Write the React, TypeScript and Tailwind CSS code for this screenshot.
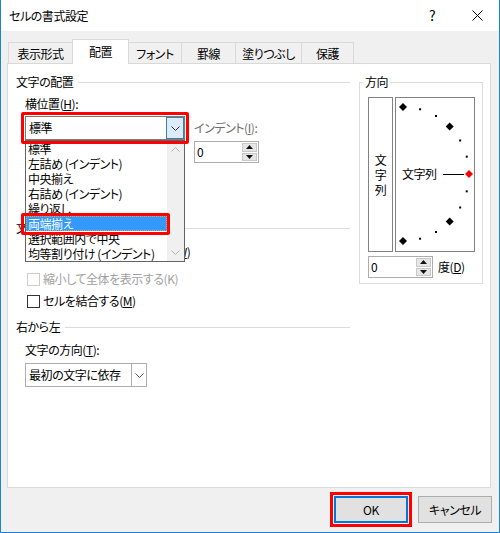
import React from "react";

const tabs = ["表示形式", "配置", "フォント", "罫線", "塗りつぶし", "保護"];
const tabWidths = ["w-[65px]", "w-[57px]", "w-[54px]", "w-[55px]", "w-[67px]", "w-[53px]"];

const listItems = [
  "標準",
  "左詰め (インデント)",
  "中央揃え",
  "右詰め (インデント)",
  "繰り返し",
  "両端揃え",
  "選択範囲内で中央",
  "均等割り付け (インデント)",
];

function ChevronDown({ color = "#444" }: { color?: string }) {
  return (
    <svg width="9" height="5" viewBox="0 0 9 5">
      <polyline points="0.5,0.5 4.5,4.5 8.5,0.5" fill="none" stroke={color} strokeWidth="1" />
    </svg>
  );
}

function ChevronUp({ color = "#444" }: { color?: string }) {
  return (
    <svg width="9" height="5" viewBox="0 0 9 5">
      <polyline points="0.5,4.5 4.5,0.5 8.5,4.5" fill="none" stroke={color} strokeWidth="1" />
    </svg>
  );
}

function SpinButton({ up }: { up?: boolean }) {
  return (
    <div className="flex flex-1 items-center justify-center border border-[#c8c8c8] bg-[#e6e6e6]">
      <svg width="7" height="4" viewBox="0 0 7 4">
        <polygon points={up ? "3.5,0 7,4 0,4" : "0,0 7,0 3.5,4"} fill="#111" />
      </svg>
    </div>
  );
}

function Spinner({ className, value }: { className: string; value: string }) {
  return (
    <div className={`flex h-[22px] border border-[#adadad] bg-white ${className}`}>
      <span className="flex-1 pl-[2px] leading-[20px]">{value}</span>
      <div className="flex w-[17px] flex-col gap-px p-px">
        <SpinButton up />
        <SpinButton />
      </div>
    </div>
  );
}

function SectionHeader({ label, className = "" }: { label: string; className?: string }) {
  return (
    <div className={`flex h-[16px] items-center leading-[16px] ${className}`}>
      <span>{label}</span>
      <span className="ml-[5px] h-px flex-1 bg-[#dcdcdc]" />
    </div>
  );
}

function CheckRow({ children, disabled, className = "" }: { children: React.ReactNode; disabled?: boolean; className?: string }) {
  return (
    <div className={`flex h-[16px] items-center leading-[16px] ${className}`}>
      <span
        className={`ml-[11px] h-[13px] w-[13px] border bg-white ${disabled ? "border-[#cccccc]" : "border-[#333333]"}`}
      />
      <span className={`ml-[3px] ${disabled ? "text-[#a0a0a0]" : ""}`}>{children}</span>
    </div>
  );
}

function OrientationDial() {
  const points = Array.from({ length: 13 }, (_, i) => {
    const a = ((-90 + 15 * i) * Math.PI) / 180;
    return { i, x: 7 + 66 * Math.cos(a), y: 76 + 67 * Math.sin(a) };
  });
  return (
    <div className="relative ml-[2px] h-[155px] w-[80px] border border-[#828282]">
      <svg className="absolute inset-0" width="78" height="153" viewBox="0 0 78 153">
        {points.map((p) =>
          p.i % 3 === 0 ? (
            <polygon
              key={p.i}
              points={`${p.x},${p.y - 4} ${p.x + 4},${p.y} ${p.x},${p.y + 4} ${p.x - 4},${p.y}`}
              fill={p.i === 6 ? "#ff0000" : "#000"}
            />
          ) : (
            <rect key={p.i} x={p.x - 1} y={p.y - 1} width="2" height="2" fill="#000" />
          ),
        )}
        <line x1="47" y1="76.5" x2="68" y2="76.5" stroke="#000" strokeWidth="1" />
      </svg>
      <span className="absolute left-[6px] top-[68px] leading-[16px]">文字列</span>
    </div>
  );
}

export default function App() {
  return (
    <div className="flex h-[533px] w-[500px] flex-col border-x border-b border-[#1883d7] bg-[#f0f0f0] font-['Noto_Sans_CJK_JP','Noto_Sans',sans-serif] text-[12px] tracking-[-0.45px] text-black [font-feature-settings:'palt']">
      {/* title bar */}
      <div className="flex h-[31px] shrink-0 items-center bg-white pl-[8px]">
        <span>セルの書式設定</span>
        <span className="ml-auto w-[30px] text-center text-[14px]">?</span>
        <span className="ml-[15px] mr-[7px] flex w-[30px] justify-center">
          <svg width="11" height="11" viewBox="0 0 11 11">
            <path d="M0.5 0.5 L10.5 10.5 M10.5 0.5 L0.5 10.5" stroke="#000" strokeWidth="1" />
          </svg>
        </span>
      </div>

      {/* tabs */}
      <div className="ml-[7px] mt-[8px] flex h-[24px] items-end">
        {tabs.map((t, i) => (
          <div
            key={t}
            className={`${tabWidths[i]} ${i > 0 ? "-ml-px" : ""} flex items-center justify-center border-x border-t border-[#d9d9d9] ${
              i === 1 ? "relative z-10 -mb-px h-[25px] bg-white pb-[1px]" : "h-[21px] bg-[#f0f0f0] pt-[1px]"
            }`}
          >
            {t}
          </div>
        ))}
      </div>

      {/* panel */}
      <div className="relative ml-[6px] flex h-[425px] w-[484px] border border-[#d9d9d9] bg-white">
        <div className="flex w-[342px] flex-col pl-[8px] pt-[10px]">
          <SectionHeader label="文字の配置" />
          <div className="ml-[9px] mt-[6px] h-[16px] leading-[16px]">
            横位置(<span className="underline">H</span>):
          </div>
          <div className="ml-[9px] mt-[4px] flex items-start">
            <div className="relative flex h-[24px] w-[160px] border border-[#7a7a7a] bg-white">
              <span className="flex-1 pl-[3px] leading-[22px]">標準</span>
              <span className="flex w-[18px] items-center justify-center border border-[#3c7fb1] bg-[#dcecfc]">
                <ChevronDown color="#333" />
              </span>
              {/* dropdown list */}
              <div className="absolute left-[-1px] top-[23px] z-20 flex h-[122px] w-[160px] border border-[#646464] bg-white">
                <div className="flex flex-1 flex-col">
                  {listItems.map((item, i) =>
                    i === 5 ? (
                      <div key={item} className="relative h-[15px] border border-dotted border-[#f0a040] bg-[#3399ff] pl-[1px] leading-[13px] text-white">
                        {item}
                        <div className="pointer-events-none absolute bottom-[-5px] left-[-6px] right-[-4px] top-[-4px] z-30 rounded-[2px] border-[3px] border-[#ff0000]" />
                      </div>
                    ) : (
                      <div key={item} className="h-[15px] whitespace-nowrap pl-[2px] leading-[15px]">
                        {item}
                      </div>
                    ),
                  )}
                </div>
                <div className="flex w-[17px] flex-col items-center justify-between bg-[#f0f0f0] pb-[6px] pt-[6px]">
                  <ChevronUp color="#b4b4b4" />
                  <ChevronDown color="#b4b4b4" />
                </div>
              </div>
              <div className="pointer-events-none absolute inset-[-5px] z-30 rounded-[2px] border-[3px] border-[#ff0000]" />
            </div>
            <div className="ml-[9px] flex flex-col">
              <div className="mt-[4px] h-[16px] leading-[16px] text-[#6d6d6d]">
                インデント(<span className="underline">I</span>):
              </div>
              <Spinner className="mt-[5px] w-[65px]" value="0" />
            </div>
          </div>

          <SectionHeader label="文字の制御" className="mt-[57px]" />
          <CheckRow className="mt-[8px]">
            折り返して全体を表示する(<span className="underline">W</span>)
          </CheckRow>
          <CheckRow className="mt-[11px]" disabled>
            縮小して全体を表示する(K)
          </CheckRow>
          <CheckRow className="mt-[6px]">
            セルを結合する(<span className="underline">M</span>)
          </CheckRow>

          <SectionHeader label="右から左" className="mt-[10px]" />
          <div className="ml-[9px] mt-[7px] h-[16px] leading-[16px]">
            文字の方向(<span className="underline">T</span>):
          </div>
          <div className="ml-[9px] mt-[5px] flex h-[24px] w-[122px] border border-[#adadad] bg-white">
            <span className="flex-1 pl-[3px] leading-[22px]">最初の文字に依存</span>
            <span className="flex w-[15px] items-center justify-center border-l border-[#adadad]">
              <ChevronDown color="#555" />
            </span>
          </div>
        </div>

        <fieldset className="ml-[9px] mt-[10px] h-[210px] w-[124px] self-start border border-[#dcdcdc]">
          <legend className="ml-[3px] px-[2px] leading-[16px]">方向</legend>
          <div className="ml-[8px] mt-[7px] flex">
            <div className="flex h-[155px] w-[25px] flex-col items-center justify-center border border-[#828282] leading-[15px]">
              <span>文</span>
              <span>字</span>
              <span>列</span>
            </div>
            <OrientationDial />
          </div>
          <div className="ml-[8px] mt-[4px] flex items-center">
            <Spinner className="w-[65px]" value="0" />
            <span className="ml-[5px]">
              度(<span className="underline">D</span>)
            </span>
          </div>
        </fieldset>
      </div>

      {/* buttons */}
      <div className="mr-[7px] mt-[8px] flex justify-end gap-[10px]">
        <button className="h-[27px] w-[74px] border-2 border-[#0078d7] bg-[#e1e1e1] outline-[3px] outline-offset-[1px] outline-[#ff0000] outline">
          OK
        </button>
        <button className="h-[27px] w-[74px] border border-[#adadad] bg-[#e1e1e1]">キャンセル</button>
      </div>
    </div>
  );
}
